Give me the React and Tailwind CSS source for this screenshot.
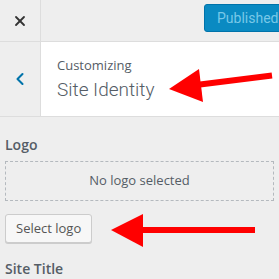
import { X, ChevronLeft } from 'lucide-react'

const openSans = { fontFamily: '"Open Sans", "Noto Sans", sans-serif' }
const roboto = { fontFamily: 'Roboto, "Open Sans", sans-serif' }

export default function App() {
  return (
    <div className="relative w-[279px] h-[279px] overflow-hidden bg-[#eeeeee] text-[#555d66]" style={openSans}>
      <div className="flex h-[42px] border-b border-[#dddddd]">
        <div className="w-[41px] shrink-0 flex items-center justify-center border-r border-[#dddddd] text-[#333]">
          <X size={16} strokeWidth={2.75} />
        </div>
        <div className="flex-1 flex items-start justify-end pt-[4px]">
          <div className="h-[28px] w-[80px] -mr-[5px] rounded-[3px] bg-[#0a8ac2] border border-[#0073aa] text-[#78c8e8] text-[14px] flex items-center pl-[12px]" style={roboto}>
            Published
          </div>
        </div>
      </div>

      <div className="flex h-[75px] border-b border-[#dddddd]">
        <div className="w-[41px] shrink-0 flex items-center justify-center border-r border-[#dddddd] bg-[#eeeeee] text-[#0073aa]">
          <ChevronLeft size={20} strokeWidth={2.5} />
        </div>
        <div className="flex-1 bg-white pl-[16px] pt-[14px]">
          <div className="text-[13px] leading-[18px] text-[#555d66]">Customizing</div>
          <div className="text-[19px] leading-[28px] mt-[2px] text-[#555d66] font-light" style={roboto}>Site Identity</div>
        </div>
      </div>

      <div className="px-[5px] pt-[18px]">
        <div className="text-[14px] font-semibold leading-[20px] text-[#555d66]">Logo</div>
        <div className="mt-[6px] h-[40px] border border-dashed border-[#b4b9be] flex items-center justify-center text-[13px] text-[#555d66]">
          No logo selected
        </div>
        <div className="mt-[13px] inline-flex h-[29px] items-center px-[10px] rounded-[3px] border border-[#cccccc] bg-[#f7f7f7] shadow-[0_1px_0_#cccccc] text-[13px] text-[#555]">
          Select logo
        </div>
        <div className="mt-[16px] text-[14px] font-semibold leading-[20px] text-[#555d66]">Site Title</div>
      </div>

      <svg className="absolute left-0 top-0 pointer-events-none" width="279" height="279" viewBox="0 0 279 279">
        <line x1="272" y1="75.5" x2="196" y2="85" stroke="#ff0000" strokeWidth="6" />
        <polygon points="169,89 199,69 203,102" fill="#ff0000" />
        <line x1="255" y1="230" x2="140" y2="230" stroke="#ff0000" strokeWidth="6" />
        <polygon points="111,230 143,214 143,247" fill="#ff0000" />
      </svg>
    </div>
  )
}
